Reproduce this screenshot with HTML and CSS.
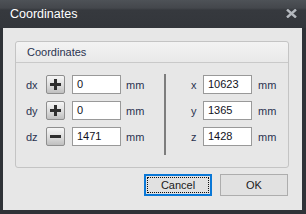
FILE: index.html
```html
<!DOCTYPE html>
<html>
<head>
<meta charset="utf-8">
<link rel="stylesheet" href="styles.css">
</head>
<body>
<div class="window">
  <div class="titlebar">
    <span class="title">Coordinates</span>
    <svg class="close" width="11" height="9" viewBox="0 0 11 9"><path d="M1 0.5 L10 8.5 M10 0.5 L1 8.5" stroke="#b4b8be" stroke-width="2.4" fill="none"/></svg>
  </div>
  <div class="client">
    <div class="group">
      <div class="group-head">Coordinates</div>
      <div class="group-body">
        <div class="col left">
          <div class="row"><span class="lbl">dx</span><span class="pm"><svg width="11" height="11" viewBox="0 0 11 11"><path d="M0 4h11v3H0zM4 0h3v11H4z" fill="#2e2e2e"/></svg></span><span class="inp">0</span><span class="unit">mm</span></div>
          <div class="row"><span class="lbl">dy</span><span class="pm"><svg width="11" height="11" viewBox="0 0 11 11"><path d="M0 4h11v3H0zM4 0h3v11H4z" fill="#2e2e2e"/></svg></span><span class="inp">0</span><span class="unit">mm</span></div>
          <div class="row"><span class="lbl">dz</span><span class="pm"><svg width="11" height="11" viewBox="0 0 11 11"><path d="M0 4h11v3H0z" fill="#2e2e2e"/></svg></span><span class="inp">1471</span><span class="unit">mm</span></div>
        </div>
        <div class="sep"></div>
        <div class="col right">
          <div class="row"><span class="lbl2">x</span><span class="inp">10623</span><span class="unit2">mm</span></div>
          <div class="row"><span class="lbl2">y</span><span class="inp">1365</span><span class="unit2">mm</span></div>
          <div class="row"><span class="lbl2">z</span><span class="inp">1428</span><span class="unit2">mm</span></div>
        </div>
      </div>
    </div>
    <div class="buttons">
      <div class="btn default"><span class="focus">Cancel</span></div>
      <div class="btn">OK</div>
    </div>
  </div>
</div>
</body>
</html>
```
FILE: styles.css
```css
html, body {
  margin: 0;
  padding: 0;
  background: #2f3237;
}
.window {
  width: 306px;
  height: 214px;
  display: flex;
  flex-direction: column;
  background: #2f3237;
  font-family: "Liberation Sans", Arial, sans-serif;
}
.titlebar {
  height: 28px;
  flex: none;
  display: flex;
  align-items: center;
  justify-content: space-between;
  padding: 0 10px 1px 10px;
  box-sizing: border-box;
  background: linear-gradient(#4e5257 0, #44474c 8px, #36393e 10px, #33363b 100%);
  color: #ffffff;
  font-size: 12.5px;
}
.close {
  margin-right: -1px;
}
.client {
  flex: 1;
  margin: 0 4px 4px 3px;
  background: #e7e7e7;
  padding: 13px 13px 0 12px;
  box-sizing: border-box;
}
.group {
  border: 1px solid #c4c4c4;
  border-radius: 3px;
  background: #e7e7e7;
}
.group-head {
  height: 20px;
  line-height: 20px;
  padding-left: 11px;
  background: linear-gradient(#f3f3f3, #e9e9e9);
  border-bottom: 1px solid #c9c9c9;
  border-radius: 3px 3px 0 0;
  font-size: 11px;
  color: #2b3350;
}
.group-body {
  display: flex;
  padding: 12px 0 12px 10px;
}
.col {
  display: flex;
  flex-direction: column;
  gap: 7px;
}
.left {
  width: 138px;
}
.right {
  padding-left: 25px;
}
.row {
  display: flex;
  align-items: center;
  height: 19px;
  font-size: 11px;
  color: #2b3350;
}
.lbl {
  width: 20px;
}
.lbl2 {
  width: 12px;
}
.pm {
  width: 19px;
  height: 19px;
  box-sizing: border-box;
  border: 1px solid #8e8e8e;
  border-radius: 2px;
  background: linear-gradient(#f6f6f6, #dcdcdc 55%, #bfbfbf);
  display: flex;
  align-items: center;
  justify-content: center;
  margin-right: 7px;
}
.inp {
  width: 49px;
  height: 19px;
  box-sizing: border-box;
  border: 1px solid #999999;
  background: #ffffff;
  padding-left: 4px;
  line-height: 17px;
  color: #111122;
  font-size: 11px;
}
.unit {
  margin-left: 5px;
}
.unit2 {
  margin-left: 6px;
}
.sep {
  width: 2px;
  height: 81px;
  margin-top: -1px;
  background: #7d7d7d;
}
.buttons {
  display: flex;
  justify-content: flex-end;
  gap: 8px;
  margin: 6px 1px 0 0;
}
.btn {
  width: 68px;
  height: 22px;
  box-sizing: border-box;
  border: 1px solid #adadad;
  background: #e1e1e1;
  display: flex;
  align-items: center;
  justify-content: center;
  font-size: 11px;
  color: #1a1a1a;
}
.btn.default {
  border: 2px solid #0a78d7;
  padding: 1px;
}
.focus {
  flex: 1;
  align-self: stretch;
  display: flex;
  align-items: center;
  justify-content: center;
  border: 1px dotted #111111;
}
```
